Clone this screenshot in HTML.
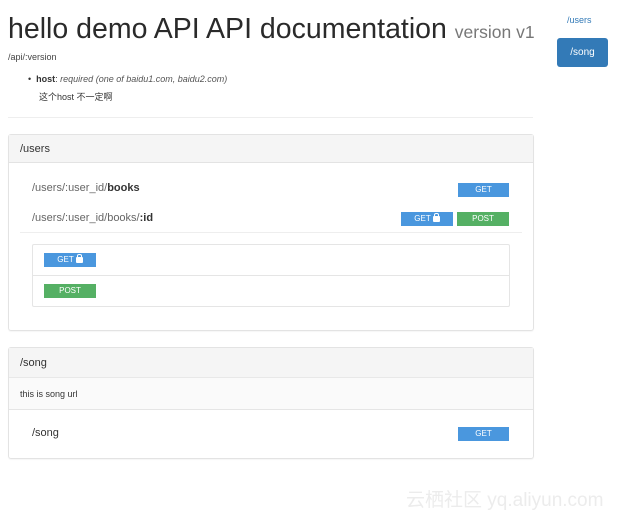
<!DOCTYPE html>
<html><head><meta charset="utf-8"><style>
*{margin:0;padding:0;box-sizing:border-box}
body{width:621px;height:519px;background:#fff;position:relative;overflow:hidden;font-family:"Liberation Sans","Noto Sans CJK SC",sans-serif;color:#333}
.a{position:absolute;white-space:nowrap}
.btn{position:absolute;height:14px;color:#fff;font-size:8px;line-height:14px;text-align:center}
.get{background:#4a97de}
.post{background:#55b064}
.panel{position:absolute;left:8px;width:526px;border:1px solid #e3e3e3;border-radius:3px;box-shadow:0 1px 1px rgba(0,0,0,.04)}
.lock{display:inline-block;width:7px;height:6px;background:#fff;border-radius:1px;position:relative;vertical-align:-1px;margin-left:2px}
.lock:before{content:"";position:absolute;left:1px;top:-3px;width:3px;height:3px;border:1px solid #fff;border-bottom:none;border-radius:2px 2px 0 0}
</style></head><body>
<div class="a" style="left:8px;top:13px;font-size:28.5px;color:#2a2a2a">hello demo API API documentation <span style="font-size:17.5px;color:#777">version v1</span></div>
<div class="a" style="left:8px;top:52px;font-size:9px;color:#444">/api/:version</div>
<div class="a" style="left:28px;top:74px;font-size:9px;color:#333">• &nbsp;<b>host</b>: <i style="color:#555">required (one of baidu1.com, baidu2.com)</i></div>
<div class="a" style="left:39px;top:90px;font-size:9px;color:#333">这个host 不一定啊</div>
<div class="a" style="left:8px;top:117px;width:525px;height:1px;background:#eee"></div>

<div class="panel" style="top:134px;height:197px">
 <div style="height:28px;background:#f5f5f5;border-bottom:1px solid #e3e3e3;font-size:11px;line-height:28px;padding-left:11px">/users</div>
</div>
<div class="a" style="left:32px;top:182px;font-size:11px;color:#666">/users/:user_id/<b style="color:#333">books</b></div>
<div class="btn get" style="left:458px;top:183px;width:51px">GET</div>
<div class="a" style="left:32px;top:212px;font-size:11px;color:#666">/users/:user_id/books/<b style="color:#333">:id</b></div>
<div class="btn get" style="left:401px;top:212px;width:52px">GET<span class="lock"></span></div>
<div class="btn post" style="left:457px;top:212px;width:52px">POST</div>
<div class="a" style="left:20px;top:232px;width:502px;height:1px;background:#eee"></div>
<div class="a" style="left:32px;top:244px;width:478px;height:63px;border:1px solid #e5e5e5;border-radius:2px"></div>
<div class="a" style="left:33px;top:275px;width:476px;height:1px;background:#e5e5e5"></div>
<div class="btn get" style="left:44px;top:253px;width:52px">GET<span class="lock"></span></div>
<div class="btn post" style="left:44px;top:284px;width:52px">POST</div>

<div class="panel" style="top:347px;height:112px">
 <div style="height:30px;background:#f5f5f5;border-bottom:1px solid #e8e8e8;font-size:11px;line-height:30px;padding-left:11px">/song</div>
 <div style="height:32px;background:#fafafa;border-bottom:1px solid #e5e5e5;font-size:9px;line-height:32px;padding-left:11px">this is song url</div>
</div>
<div class="a" style="left:32px;top:427px;font-size:11px;color:#333">/song</div>
<div class="btn get" style="left:458px;top:427px;width:51px">GET</div>

<div class="a" style="left:567px;top:15px;font-size:9px;color:#337ab7">/users</div>
<div class="a" style="left:557px;top:38px;width:51px;height:29px;background:#337ab7;border-radius:3px;color:#fff;font-size:10px;line-height:29px;text-align:center">/song</div>

<div class="a" style="left:406px;top:485px;font-size:19px;color:#ececec">云栖社区 yq.aliyun.com</div>
</body></html>
